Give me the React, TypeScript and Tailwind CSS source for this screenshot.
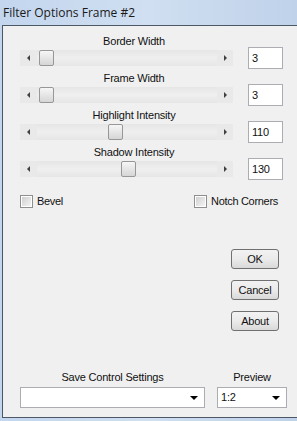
import React from 'react';

const sliders = [
    { label: 'Border Width', value: 3 },
    { label: 'Frame Width', value: 3 },
    { label: 'Highlight Intensity', value: 110 },
    { label: 'Shadow Intensity', value: 130 },
];

function Slider({ value }: { value: number }) {
    // thumb travel: 0..255 over ~165px of the inner track
    const left = Math.round((value / 255) * 165);
    return (
        <div className="flex h-[16px] w-[213px] bg-[#e9e9e9]">
            <div className="flex w-[17px] items-center justify-center">
                <div className="h-0 w-0 border-y-[3px] border-r-[3px] border-y-transparent border-r-[#404040]" />
            </div>
            <div className="relative flex-1 bg-gradient-to-b from-[#e6e6e6] via-[#efefef] to-[#e6e6e6]">
                <div
                    className="absolute top-0 h-[16px] w-[15px] rounded-[2px] border border-[#979797] bg-gradient-to-b from-[#f6f6f6] to-[#d6d6d6]"
                    style={{ left }}
                />
            </div>
            <div className="flex w-[16px] items-center justify-center">
                <div className="h-0 w-0 border-y-[3px] border-l-[3px] border-y-transparent border-l-[#404040]" />
            </div>
        </div>
    );
}

function Button({ children }: { children: React.ReactNode }) {
    return (
        <div className="flex h-[20px] w-[48px] items-center justify-center rounded-[3px] border border-[#707070] bg-gradient-to-b from-[#f2f2f2] via-[#ebebeb] to-[#d9d9d9] text-[11px] text-[#111]">
            {children}
        </div>
    );
}

function Check({ label }: { label: string }) {
    return (
        <div className="flex items-center gap-[4px]">
            <div className="h-[13px] w-[13px] border border-[#8e8f8f] bg-white p-[1px]">
                <div className="h-full w-full bg-gradient-to-br from-[#d0d0d0] to-[#f4f4f4]" />
            </div>
            <span className="text-[11px] leading-[13px] tracking-[-0.3px] text-[#111]">{label}</span>
        </div>
    );
}

function Dropdown({ text, width }: { text: string; width: string }) {
    return (
        <div className={`flex h-[21px] items-center justify-between border border-[#abadb3] bg-white pl-[3px] pr-[6px] ${width}`}>
            <span className="text-[11px] text-[#111]">{text}</span>
            <div className="h-0 w-0 border-x-[4px] border-t-[4px] border-x-transparent border-t-black" />
        </div>
    );
}

export default function App() {
    return (
        <div className="flex h-[421px] w-[297px] flex-col overflow-hidden bg-gradient-to-r from-[#c3d6ee] via-[#d0dff1] to-[#bfd2ea]" style={{ fontFamily: '"Liberation Sans", Arial, sans-serif' }}>
            {/* Title bar */}
            <div className="flex h-[25px] shrink-0 items-center pl-[3px] text-[12px] text-[#1a1a1a]" style={{ fontFamily: '"Open Sans", "Noto Sans", sans-serif' }}>
                Filter Options Frame #2
            </div>

            {/* Client area */}
            <div className="ml-[2px] mb-[3px] flex flex-1 flex-col border-t border-b border-l border-[#4d5866] bg-[#f0f0f0] pl-[17px] pt-[8px] tracking-[-0.2px]">
                {sliders.map((s) => (
                    <div key={s.label} className="mb-[2px] flex flex-col">
                        <div className="h-[13px] w-[228px] pt-[1px] text-center text-[11px] leading-[13px] text-[#111]">{s.label}</div>
                        <div className="flex h-[22px] items-center">
                            <Slider value={s.value} />
                            <div className="ml-[15px] flex h-[22px] w-[35px] items-center border border-[#abadb3] bg-white pl-[3px] text-[11px] text-[#111]">
                                {s.value}
                            </div>
                        </div>
                    </div>
                ))}

                <div className="mt-[13px] flex w-[258px] items-center justify-between">
                    <Check label="Bevel" />
                    <Check label="Notch Corners" />
                </div>

                <div className="mt-[41px] flex w-[259px] flex-col items-end gap-[11px]">
                    <Button>OK</Button>
                    <Button>Cancel</Button>
                    <Button>About</Button>
                </div>

                <div className="mt-[40px] flex gap-[12px]">
                    <div className="flex flex-col items-center gap-[3px]">
                        <span className="text-[11px] leading-[13px] text-[#111]">Save Control Settings</span>
                        <Dropdown text="" width="w-[185px]" />
                    </div>
                    <div className="flex flex-col items-center gap-[3px]">
                        <span className="text-[11px] leading-[13px] text-[#111]">Preview</span>
                        <Dropdown text="1:2" width="w-[70px]" />
                    </div>
                </div>
            </div>
        </div>
    );
}
